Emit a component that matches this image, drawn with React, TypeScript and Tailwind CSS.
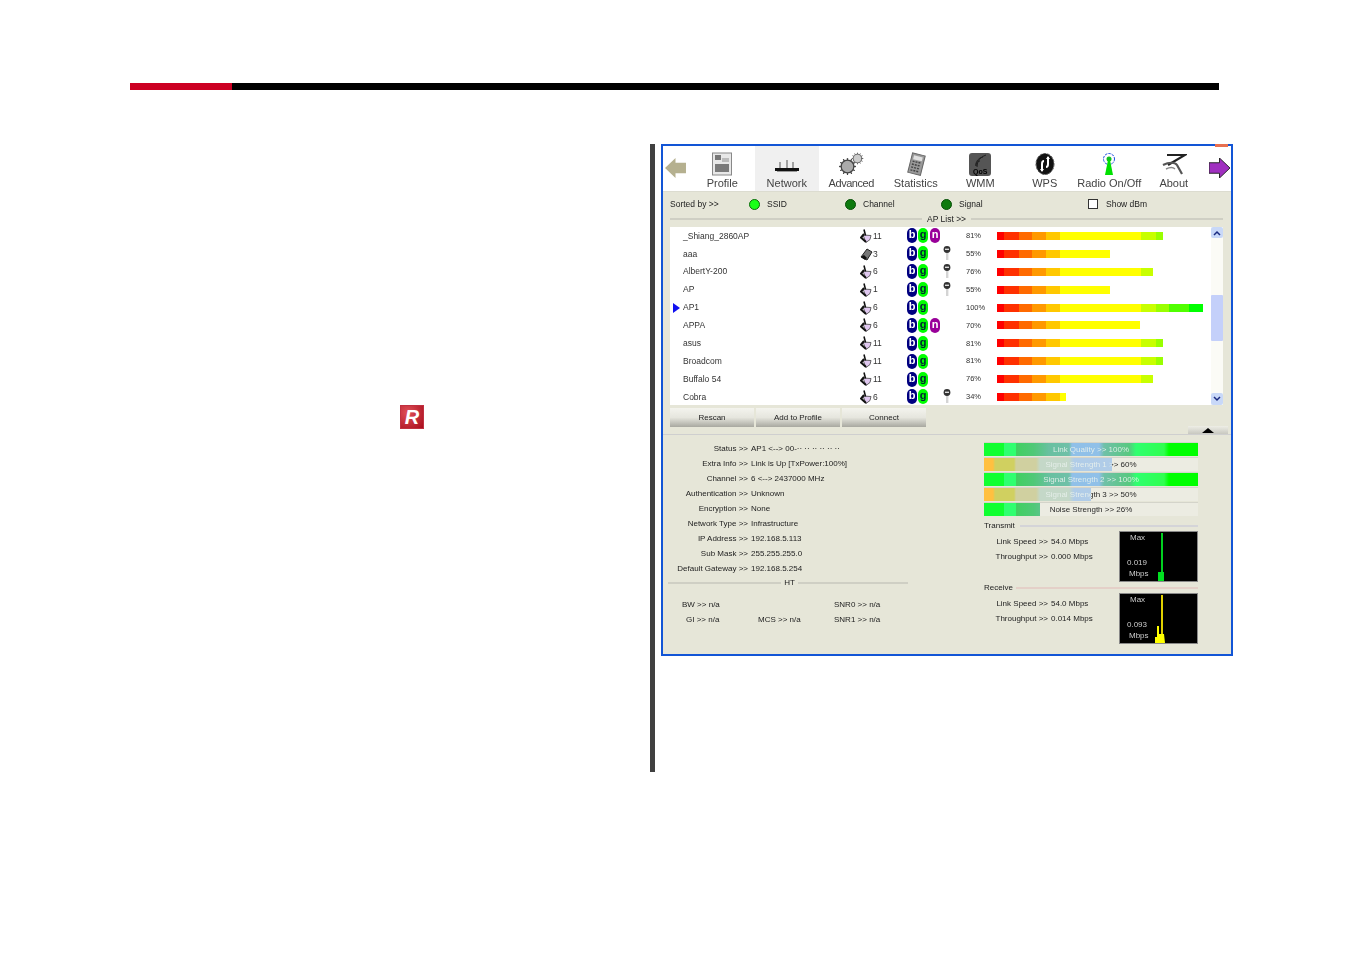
import React from 'react';
import { Cog } from 'lucide-react';

const RED_BAR =
  'bg-[linear-gradient(90deg,#ff0000_0,#ff0000_7px,#ff3000_7px,#ff3000_22px,#ff6a00_22px,#ff6a00_35px,#ff9900_35px,#ff9900_49px,#ffc800_49px,#ffc800_63px,#ffff00_63px,#ffff00_144px,#c8ff00_144px,#c8ff00_159px,#99ff00_159px,#99ff00_172px,#50ff00_172px,#50ff00_192px,#00ff00_192px,#00ff00_206px)]';

const GREEN_FILL =
  'bg-[linear-gradient(90deg,#10ff30_0,#10ff30_20px,#30ff70_20px,#30ff70_32px,#40d060_32px,#50c878_50px,#68c0a0_65px,#70c0a8_85px,#90c0e8_88px,#90c0e8_115px,#70c0a8_120px,#58c880_145px,#30ff70_152px,#30ff50_180px,#00ff00_185px,#00ff00_214px)]';
const ORANGE_FILL =
  'bg-[linear-gradient(90deg,#ffc040_0,#ffc040_9px,#d0d060_11px,#d0d060_30px,#d0d0a0_32px,#d0d0a0_52px,#c4d8c8_56px,#c4d8c8_85px,#b0cce8_90px,#b0cce8_128px)]';

const networks = [
  { name: '_Shiang_2860AP', ch: 11, n: true, key: false, pct: 81, w: 166 },
  { name: 'aaa', ch: 3, n: false, key: true, pct: 55, w: 113, adhoc: true },
  { name: 'AlbertY-200', ch: 6, n: false, key: true, pct: 76, w: 156 },
  { name: 'AP', ch: 1, n: false, key: true, pct: 55, w: 113 },
  { name: 'AP1', ch: 6, n: false, key: false, pct: 100, w: 206, active: true },
  { name: 'APPA', ch: 6, n: true, key: false, pct: 70, w: 143 },
  { name: 'asus', ch: 11, n: false, key: false, pct: 81, w: 166 },
  { name: 'Broadcom', ch: 11, n: false, key: false, pct: 81, w: 166 },
  { name: 'Buffalo 54', ch: 11, n: false, key: false, pct: 76, w: 156 },
  { name: 'Cobra', ch: 6, n: false, key: true, pct: 34, w: 69 },
];

const details = [
  ['Status >>', 'AP1 <--> 00-·· ·· ·· ·· ·· ··'],
  ['Extra Info >>', 'Link is Up [TxPower:100%]'],
  ['Channel >>', '6 <--> 2437000 MHz'],
  ['Authentication >>', 'Unknown'],
  ['Encryption >>', 'None'],
  ['Network Type >>', 'Infrastructure'],
  ['IP Address >>', '192.168.5.113'],
  ['Sub Mask >>', '255.255.255.0'],
  ['Default Gateway >>', '192.168.5.254'],
];

const meters = [
  { label: 'Link Quality >> 100%', w: 214, fill: GREEN_FILL },
  { label: 'Signal Strength 1 >> 60%', w: 128, fill: ORANGE_FILL },
  { label: 'Signal Strength 2 >> 100%', w: 214, fill: GREEN_FILL },
  { label: 'Signal Strength 3 >> 50%', w: 107, fill: ORANGE_FILL },
  { label: 'Noise Strength >> 26%', w: 56, fill: GREEN_FILL },
];

const ProfileIcon = () => (
  <svg width="22" height="24" viewBox="0 0 22 24">
    <rect x="1.5" y="1" width="19" height="22" fill="#e8e8e8" stroke="#888" />
    <rect x="4" y="3" width="6" height="5" fill="#777" />
    <rect x="11" y="6" width="7" height="4" fill="#bbb" />
    <rect x="4" y="12" width="14" height="8" fill="#7a7a7a" />
  </svg>
);

const NetworkIcon = () => (
  <svg width="26" height="24" viewBox="0 0 26 24">
    <path d="M6 10v6M13 8v8M19 10v6" stroke="#555" strokeWidth="1" />
    <rect x="1" y="16" width="24" height="3" fill="#111" />
    <rect x="3" y="19" width="20" height="1" fill="#999" />
  </svg>
);

const AdvancedIcon = () => (
  <span className="relative block w-[26px] h-[24px]">
    <Cog className="absolute left-0 bottom-0 w-[19px] h-[19px] text-[#444] fill-[#aaa]" strokeWidth={1.6} />
    <Cog className="absolute right-0 top-0 w-[13px] h-[13px] text-[#666] fill-[#ccc]" strokeWidth={1.8} />
  </span>
);

const StatisticsIcon = () => (
  <svg width="22" height="24" viewBox="0 0 22 24">
    <g transform="rotate(14 11 12)">
      <rect x="5" y="2" width="13" height="20" fill="#999" stroke="#666" />
      <rect x="7" y="4" width="9" height="4" fill="#e0e0e0" />
      <path d="M7 10h9M7 13h9M7 16h9M7 19h9" stroke="#444" strokeWidth="1.4" strokeDasharray="2 1" />
    </g>
  </svg>
);

const WmmIcon = () => (
  <span className="relative flex w-[22px] h-[23px] rounded-[3px] bg-[#555] items-end justify-center overflow-hidden">
    <svg className="absolute left-0 top-0" width="22" height="16" viewBox="0 0 22 16" fill="none" stroke="#222">
      <path d="M7 13a4 4 0 0 1 4-5M7 13a8 8 0 0 1 7-9M8 14a12 12 0 0 1 9-12" />
    </svg>
    <span className="text-[7px] leading-[8px] font-bold text-black">QoS</span>
  </span>
);

const WpsIcon = () => (
  <svg width="22" height="24" viewBox="0 0 22 24">
    <ellipse cx="11" cy="12" rx="9" ry="10.5" fill="#111" stroke="#555" strokeDasharray="3 1" />
    <path d="M8 19V12c0-2 1-3 2-3M14 5v7c0 2-1 3-2 3" fill="none" stroke="#fff" strokeWidth="2" />
    <path d="M6 17l2 3 2-3M12 7l2-3 2 3" fill="#fff" />
  </svg>
);

const RadioIcon = () => (
  <svg width="16" height="24" viewBox="0 0 16 24">
    <circle cx="8" cy="7" r="5.5" fill="none" stroke="#2050e0" strokeWidth="1" strokeDasharray="2.5 1" />
    <circle cx="8" cy="7" r="2.5" fill="#10c020" />
    <path d="M7 8h2l3 15H4z" fill="#00e000" />
  </svg>
);

const AboutIcon = () => (
  <svg width="26" height="24" viewBox="0 0 26 24" fill="none" stroke="#222" strokeWidth="2.2">
    <path d="M6 3h18L7 13" />
    <path d="M2 13c6-3 12-3 14 0l5 9" stroke="#555" />
    <path d="M5 17c4-2 7-2 9 0" stroke="#888" strokeWidth="1.4" />
  </svg>
);

const tabs = [
  { label: 'Profile', icon: <ProfileIcon /> },
  { label: 'Network', icon: <NetworkIcon />, active: true },
  { label: 'Advanced', icon: <AdvancedIcon />, narrow: true },
  { label: 'Statistics', icon: <StatisticsIcon /> },
  { label: 'WMM', icon: <WmmIcon /> },
  { label: 'WPS', icon: <WpsIcon /> },
  { label: 'Radio On/Off', icon: <RadioIcon /> },
  { label: 'About', icon: <AboutIcon /> },
];

const Led = ({ on }: { on?: boolean }) => (
  <span
    className={
      on
        ? 'block w-[11px] h-[11px] rounded-full bg-[#18ff18] border border-[#0a6a0a]'
        : 'block w-[11px] h-[11px] rounded-full bg-[#0e7a0e] border border-[#085008]'
    }
  />
);

const ChannelIcon = ({ adhoc }: { adhoc?: boolean }) =>
  adhoc ? (
    <svg width="13" height="14" viewBox="0 0 13 14">
      <path d="M1 10l6-8 5 3-5 8z" fill="#777" stroke="#222" />
      <path d="M1 10l4 3 2-2-3-3z" fill="#111" />
    </svg>
  ) : (
    <svg width="13" height="14" viewBox="0 0 13 14" fill="none">
      <path d="M3 6l8 0.5-1 4-4 3z" fill="#e0c8f0" stroke="#555" strokeWidth="0.9" />
      <path d="M4 0.5l1.5 6" stroke="#111" strokeWidth="1.6" />
      <path d="M4 5L1 8.5l5 4.5" stroke="#111" strokeWidth="2" />
    </svg>
  );

const KeyIcon = () => (
  <svg width="8" height="15" viewBox="0 0 8 15">
    <rect x="3" y="6" width="2.4" height="8" fill="#d4d4d4" />
    <circle cx="4" cy="3.5" r="3.4" fill="#333" />
    <rect x="2" y="2.6" width="4" height="1.4" fill="#ddd" />
  </svg>
);

const Badge = ({ letter, color }: { letter: string; color: string }) => (
  <span className={`flex w-[10px] h-[15px] rounded-[5px] items-center justify-center text-[11px] leading-none font-bold pb-[2px] ${color}`}>
    {letter}
  </span>
);

const Divider = ({ className }: { className: string }) => <span className={`block h-[2px] ${className}`} />;

const Graph = ({ value, line, foot }: { value: string; line: string; foot: React.ReactNode }) => (
  <div className="relative w-[79px] h-[51px] bg-black border border-[#888] text-[#ccc] text-[8px] leading-none">
    <span className="absolute left-[10px] top-[2px]">Max</span>
    <span className="absolute left-[7px] top-[27px]">{value}</span>
    <span className="absolute left-[9px] top-[38px]">Mbps</span>
    <span className={`absolute left-[41px] top-[1px] bottom-0 w-[2px] ${line}`} />
    {foot}
  </div>
);

const LinkStats = ({ throughput, value, line, foot }: { throughput: string; value: string; line: string; foot: React.ReactNode }) => (
  <div className="flex">
    <div className="w-[135px] pt-[3px]">
      <div className="flex h-[15px] items-center">
        <span className="w-[64px] text-right">Link Speed &gt;&gt;</span>
        <span className="ml-[3px]">54.0 Mbps</span>
      </div>
      <div className="flex h-[15px] items-center">
        <span className="w-[64px] text-right whitespace-nowrap">Throughput &gt;&gt;</span>
        <span className="ml-[3px]">{throughput}</span>
      </div>
    </div>
    <Graph value={value} line={line} foot={foot} />
  </div>
);

export default function App() {
  return (
    <div className="min-h-[954px] bg-white pt-[83px] pl-[130px] font-['Liberation_Sans',Arial,sans-serif]">
      <div className="flex w-[1089px] h-[7px] bg-black">
        <div className="w-[102px] bg-[#cc0022]" />
      </div>

      <div className="flex mt-[54px]">
        {/* empty text column, only the small R logo is left */}
        <div className="w-[520px] pt-[261px] pl-[270px]">
          <div className="flex w-[24px] h-[24px] items-center justify-center bg-[radial-gradient(circle_at_30%_30%,#e05058,#a80c1c)] border border-[#c03040] text-white text-[20px] leading-none font-bold italic">
            R
          </div>
        </div>

        <div className="w-[5px] h-[628px] bg-[#404040]" />

        <div className="relative ml-[6px] w-[572px] h-[512px] border-2 border-[#1255d6] bg-[#e6e6d8] text-[#222] text-[8px] leading-none blur-[0.5px]">
          <span className="absolute right-[3px] -top-[2px] w-[13px] h-[3px] bg-[#e87050]" />

          {/* toolbar */}
          <div className="flex h-[46px] bg-white border-b border-[#dcdcd0]">
            <div className="flex w-[27px] items-center pl-[2px] pb-[1px]">
              <svg width="21" height="20" viewBox="0 0 22 21">
                <path d="M0 10.5L11 0v5h11v11H11v5z" fill="#b5b08f" />
              </svg>
            </div>
            {tabs.map((tab) => (
              <div
                key={tab.label}
                className={
                  tab.active
                    ? 'flex flex-col w-[64.5px] items-center bg-[#f0f0f0] pt-[6px]'
                    : 'flex flex-col w-[64.5px] items-center pt-[6px]'
                }
              >
                <div className="flex h-[24px] items-center justify-center">{tab.icon}</div>
                <span
                  className={
                    tab.narrow
                      ? 'mt-[1px] text-[11px] leading-[12px] text-[#444] whitespace-nowrap tracking-[-0.45px]'
                      : 'mt-[1px] text-[11px] leading-[12px] text-[#444] whitespace-nowrap'
                  }
                >
                  {tab.label}
                </span>
              </div>
            ))}
            <div className="flex flex-1 items-center pl-[3px] pb-[1px]">
              <svg width="21" height="20" viewBox="0 0 22 21">
                <path d="M22 10.5L11 0v5H0v11h11v5z" fill="#a030c0" stroke="#222" strokeWidth="1" />
              </svg>
            </div>
          </div>

          {/* sort options */}
          <div className="flex h-[24px] items-center text-[8.5px] pl-[7px]">
            <span className="w-[79px]">Sorted by &gt;&gt;</span>
            <Led on />
            <span className="ml-[7px] w-[78px]">SSID</span>
            <Led />
            <span className="ml-[7px] w-[78px]">Channel</span>
            <Led />
            <span className="ml-[7px] w-[129px]">Signal</span>
            <span className="w-[10px] h-[10px] bg-white border border-[#333]" />
            <span className="ml-[8px]">Show dBm</span>
          </div>

          <div className="flex h-[6px] items-center pl-[7px] pr-[8px] text-[8.5px]">
            <Divider className="w-[252px] bg-[#cfcfc4]" />
            <span className="mx-[5px] whitespace-nowrap">AP List &gt;&gt;</span>
            <Divider className="flex-1 bg-[#cfcfc4]" />
          </div>

          {/* access point list */}
          <div className="flex h-[178px] mt-[5px] ml-[7px] mr-[8px]">
            <div className="w-[541px] bg-white text-[8.5px] text-[#333] overflow-hidden">
              {networks.map((net) => (
                <div key={net.name} className="flex h-[17.9px] items-center">
                  <div className="w-[13px] pl-[3px]">
                    {net.active && <span className="block w-0 h-0 border-y-[5px] border-y-transparent border-l-[7px] border-l-[#1010f0]" />}
                  </div>
                  <span className="w-[177px]">{net.name}</span>
                  <span className="w-[13px]">
                    <ChannelIcon adhoc={net.adhoc} />
                  </span>
                  <span className="w-[34px]">{net.ch}</span>
                  <div className="flex w-[36px] gap-[1px]">
                    <Badge letter="b" color="bg-[#000080] text-white" />
                    <Badge letter="g" color="bg-[#00ff00] text-[#023]" />
                    {net.n && <Badge letter="n" color="ml-[1px] bg-[#990099] text-white" />}
                  </div>
                  <span className="w-[23px]">{net.key && <KeyIcon />}</span>
                  <span className="w-[31px] text-[7.5px] whitespace-nowrap">{net.pct}%</span>
                  <div className={`h-[8px] ${RED_BAR}`} style={{ width: net.w }} />
                </div>
              ))}
            </div>
            <div className="flex flex-col w-[12px] bg-[#fbfbf6]">
              <div className="flex h-[11px] items-center justify-center bg-[#c8d8f8] rounded-[2px]">
                <svg width="8" height="6" viewBox="0 0 8 6" fill="none" stroke="#1a2a80" strokeWidth="1.5">
                  <path d="M1 5l3-3 3 3" />
                </svg>
              </div>
              <div className="mt-[57px] h-[46px] bg-[#c4d0fa] rounded-[1px]" />
              <div className="flex-1" />
              <div className="flex h-[12px] items-center justify-center bg-[#c8d8f8] rounded-[2px]">
                <svg width="8" height="6" viewBox="0 0 8 6" fill="none" stroke="#1a2a80" strokeWidth="1.5">
                  <path d="M1 1l3 3 3-3" />
                </svg>
              </div>
            </div>
          </div>

          {/* buttons */}
          <div className="flex h-[27px] mt-[3px] pl-[7px] pr-[3px] border-b border-[#cfcfcf]">
            <div className="flex gap-[2px] h-[19px]">
              {['Rescan', 'Add to Profile', 'Connect'].map((label) => (
                <div
                  key={label}
                  className="flex w-[84px] items-center justify-center bg-gradient-to-b from-[#f4f4ee] via-[#e6e6de] to-[#a8a8a0]"
                >
                  {label}
                </div>
              ))}
            </div>
            <div className="flex w-[40px] h-[8px] ml-auto self-end items-center justify-center bg-gradient-to-b from-[#eeeee6] to-[#c8c8c0]">
              <span className="w-0 h-0 border-x-[6px] border-x-transparent border-b-[5px] border-b-black" />
            </div>
          </div>

          {/* connection details */}
          <div className="flex">
            <div className="w-[321px] pt-[6px]">
              {details.map(([label, value]) => (
                <div key={label} className="flex h-[15px] items-center">
                  <span className="w-[85px] text-right whitespace-nowrap">{label}</span>
                  <span className="ml-[3px] whitespace-nowrap">{value}</span>
                </div>
              ))}
              <div className="flex h-[14px] items-center pl-[5px] w-[245px]">
                <Divider className="flex-1 bg-[#cfcfc4]" />
                <span className="mx-[3px]">HT</span>
                <Divider className="w-[110px] bg-[#cfcfc4]" />
              </div>
              <div className="grid grid-cols-[95px_76px_1fr] auto-rows-[15px] items-center mt-[7px]">
                <span className="pl-[19px]">BW &gt;&gt; n/a</span>
                <span />
                <span>SNR0 &gt;&gt; n/a</span>
                <span className="pl-[23px]">GI &gt;&gt; n/a</span>
                <span>MCS &gt;&gt; n/a</span>
                <span>SNR1 &gt;&gt; n/a</span>
              </div>
            </div>

            <div className="w-[214px] pt-[7px]">
              <div className="flex flex-col gap-[1px]">
                {meters.map((m) => (
                  <div key={m.label} className="relative h-[14px] bg-[#ecece2] border-t border-[#d4d4ca]">
                    <div className={`h-full ${m.fill}`} style={{ width: m.w }} />
                    <span
                      className="absolute inset-0 flex items-center justify-center whitespace-nowrap bg-clip-text text-transparent"
                      style={{ backgroundImage: `linear-gradient(90deg,#e8f0ec ${m.w}px,#222 ${m.w}px)` }}
                    >
                      {m.label}
                    </span>
                  </div>
                ))}
              </div>

              <div className="flex h-[10px] mt-[5px] items-center">
                <span>Transmit</span>
                <Divider className="flex-1 ml-[5px] bg-[#d4d4d8]" />
              </div>
              <LinkStats
                throughput="0.000 Mbps"
                value="0.019"
                line="bg-[#00d020]"
                foot={<span className="absolute left-[38px] bottom-0 w-[6px] h-[9px] bg-[#00e020]" />}
              />

              <div className="flex h-[11px] items-center">
                <span>Receive</span>
                <Divider className="flex-1 ml-[3px] bg-[#e4d0c8]" />
              </div>
              <LinkStats
                throughput="0.014 Mbps"
                value="0.093"
                line="bg-[#e0d000]"
                foot={
                  <svg className="absolute left-[35px] bottom-0" width="10" height="17" viewBox="0 0 10 17">
                    <path d="M0 17v-6h2V0h2v8h5l1 9z" fill="#ffff00" />
                  </svg>
                }
              />
            </div>
          </div>
        </div>
      </div>
    </div>
  );
}
